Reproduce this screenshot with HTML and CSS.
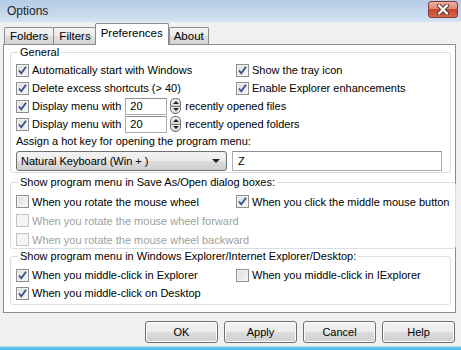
FILE: index.html
```html
<!DOCTYPE html>
<html lang="en">
  <head>
    <meta charset="utf-8" />
    <title>Options</title>
    <link rel="stylesheet" href="styles.css">
  </head>
  <body>
    <div class="window">
      <div class="titlebar">
        <span class="title">Options</span>
        <div class="close">
          <svg width="14" height="11" viewBox="0 0 14 11">
            <path d="M3 1.5 L11 9.5 M11 1.5 L3 9.5" stroke="#5a2a22" stroke-width="4.2" stroke-linecap="round"/>
            <path d="M3 1.5 L11 9.5 M11 1.5 L3 9.5" stroke="#fff" stroke-width="2.4" stroke-linecap="round"/>
          </svg>
        </div>
      </div>

      <div class="client">
        <div class="tabs">
          <div class="tab">Folders</div>
          <div class="tab">Filters</div>
          <div class="tab active">Preferences</div>
          <div class="tab about">About</div>
        </div>

        <div class="panel">
          <fieldset class="group general">
            <legend>General</legend>
            <div class="row">
              <label class="check col"><span class="cb on"></span>Automatically start with Windows</label>
              <label class="check"><span class="cb on"></span>Show the tray icon</label>
            </div>
            <div class="row">
              <label class="check col"><span class="cb on"></span>Delete excess shortcuts (&gt; 40)</label>
              <label class="check"><span class="cb on"></span>Enable Explorer enhancements</label>
            </div>
            <div class="row">
              <label class="check"><span class="cb on"></span>Display menu with</label>
              <div class="num">20</div>
              <div class="spin"><span class="up"></span><span class="down"></span></div>
              <span class="after">recently opened files</span>
            </div>
            <div class="row">
              <label class="check"><span class="cb on"></span>Display menu with</label>
              <div class="num">20</div>
              <div class="spin"><span class="up"></span><span class="down"></span></div>
              <span class="after">recently opened folders</span>
            </div>
            <div class="label">Assign a hot key for opening the program menu:</div>
            <div class="hotkey">
              <div class="combo">Natural Keyboard (Win + )<span class="arrow"></span></div>
              <div class="field">Z</div>
            </div>
          </fieldset>

          <fieldset class="group dialogs">
            <legend>Show program menu in Save As/Open dialog boxes:</legend>
            <div class="row">
              <label class="check col"><span class="cb"></span>When you rotate the mouse wheel</label>
              <label class="check"><span class="cb on"></span>When you click the middle mouse button</label>
            </div>
            <div class="row">
              <label class="check off"><span class="cb"></span>When you rotate the mouse wheel forward</label>
            </div>
            <div class="row">
              <label class="check off"><span class="cb"></span>When you rotate the mouse wheel backward</label>
            </div>
          </fieldset>

          <fieldset class="group explorer">
            <legend>Show program menu in Windows Explorer/Internet Explorer/Desktop:</legend>
            <div class="row">
              <label class="check col"><span class="cb on"></span>When you middle-click in Explorer</label>
              <label class="check"><span class="cb"></span>When you middle-click in IExplorer</label>
            </div>
            <div class="row">
              <label class="check"><span class="cb on"></span>When you middle-click on Desktop</label>
            </div>
          </fieldset>
        </div>

        <div class="buttons">
          <div class="btn">OK</div>
          <div class="btn">Apply</div>
          <div class="btn">Cancel</div>
          <div class="btn">Help</div>
        </div>
      </div>
      <div class="frame-bottom"></div>
    </div>
  </body>
</html>
```

FILE: styles.css
```css
* {
  box-sizing: border-box;
}

body {
  margin: 0;
  width: 461px;
  height: 350px;
  overflow: hidden;
  background-color: #f0f0f0;
  font-family: "Liberation Sans", Arial, sans-serif;
  font-size: 11px;
  color: #000;
}

.window {
  height: 350px;
  display: flex;
  flex-direction: column;
}

.titlebar {
  height: 22px;
  flex: none;
  display: flex;
  align-items: center;
  justify-content: space-between;
  padding: 0 3px 0 7px;
  background: linear-gradient(#b4cce8, #c9daee 70%, #d6e3f2);
}

.title {
  font-size: 12px;
  color: #1e1e1e;
}

.close {
  width: 30px;
  height: 17px;
  margin-top: -3px;
  border: 1px solid #843b2e;
  border-radius: 3px;
  display: flex;
  align-items: center;
  justify-content: center;
  background: linear-gradient(#eab2a4, #dc8672 45%, #c8462c 50%, #d2684f);
}

.client {
  flex: 1;
  padding: 0 5px 0 3px;
}

.tabs {
  height: 22px;
  display: flex;
  align-items: flex-end;
  padding-left: 1px;
}

.tab {
  height: 17px;
  padding: 0 5px;
  line-height: 16px;
  font-size: 11.5px;
  border: 1px solid #898c95;
  border-bottom: none;
  border-radius: 2px 2px 0 0;
  background: linear-gradient(#f3f3f3, #ebebeb 50%, #dddddd 51%, #d6d6d6);
  margin-right: -1px;
}

.tab.active {
  height: 22px;
  padding: 0 5px;
  line-height: 19px;
  background: #fff;
  margin: 0 0 -1px -1px;
  position: relative;
  z-index: 1;
}

.tab.about {
  padding: 0 4px;
}

.panel {
  height: 269px;
  border: 1px solid #898c95;
  background: #fff;
  padding: 1px 4px 0 6px;
}

.group {
  margin: 0;
  border: 1px solid #d5dfe5;
  border-radius: 3px;
  padding: 2px 5px 0 5px;
}

legend {
  padding: 0 2px;
  margin-left: 2px;
  line-height: 13px;
}

.general {
  height: 127px;
}

.dialogs {
  margin-top: 3px;
  height: 73px;
  padding-top: 3px;
}

.dialogs .row {
  height: 19px;
}

.explorer {
  margin-top: 1px;
  height: 55px;
  padding-top: 3px;
}

.row {
  height: 18px;
  display: flex;
  align-items: center;
}

.col {
  width: 220px;
}

.check {
  display: flex;
  align-items: center;
  white-space: nowrap;
}

.check.off {
  color: #a0a0a0;
}

.cb {
  width: 13px;
  height: 13px;
  margin-right: 3px;
  border: 1px solid #8e8f8f;
  background: linear-gradient(135deg, #dcdcdc, #f7f7f7);
  box-shadow: inset 0 0 0 1px #f4f4f4;
  flex: none;
}

.cb.on {
  background:
    url("data:image/svg+xml;utf8,<svg xmlns='http://www.w3.org/2000/svg' width='11' height='11'><path d='M2 5.5 L4.3 8.3 L9 1.8' fill='none' stroke='%23384f8a' stroke-width='1.8'/></svg>") center no-repeat,
    linear-gradient(135deg, #dcdcdc, #f7f7f7);
}

.check.off .cb {
  border-color: #c4c4c4;
  background: #f4f4f4;
  box-shadow: none;
}

.num {
  width: 42px;
  height: 17px;
  margin-left: 4px;
  border: 1px solid #abadb3;
  border-top-color: #8c8f95;
  padding: 1px 0 0 4px;
  line-height: 13px;
  background: #fff;
}

.spin {
  width: 11px;
  height: 16px;
  margin-left: 3px;
  display: flex;
  flex-direction: column;
}

.spin span {
  flex: 1;
  border: 1px solid #707070;
  background: linear-gradient(#f2f2f2, #d6d6d6);
  display: flex;
  align-items: center;
  justify-content: center;
}

.spin .up {
  border-radius: 5px 5px 0 0;
  border-bottom: none;
}

.spin .down {
  border-radius: 0 0 5px 5px;
}

.spin .up::after,
.spin .down::after {
  content: "";
  border-left: 3px solid transparent;
  border-right: 3px solid transparent;
}

.spin .up::after {
  border-bottom: 3px solid #222;
}

.spin .down::after {
  border-top: 3px solid #222;
}

.after {
  margin-left: 4px;
}

.label {
  height: 17px;
  line-height: 17px;
}

.hotkey {
  display: flex;
  gap: 5px;
  margin-top: 1px;
}

.combo {
  width: 211px;
  height: 20px;
  border: 1px solid #707070;
  border-radius: 3px;
  padding: 0 0 0 4px;
  line-height: 18px;
  display: flex;
  justify-content: space-between;
  align-items: center;
  background: linear-gradient(#f2f2f2, #ebebeb 50%, #dddddd 51%, #cfcfcf);
}

.combo .arrow {
  margin-right: 6px;
  border-left: 4px solid transparent;
  border-right: 4px solid transparent;
  border-top: 4px solid #1a1a1a;
}

.field {
  width: 210px;
  height: 20px;
  border: 1px solid #abadb3;
  border-top-color: #8c8f95;
  padding-left: 5px;
  line-height: 18px;
  background: #fff;
}

.buttons {
  display: flex;
  justify-content: flex-end;
  gap: 6px;
  padding: 8px 1px 0 0;
}

.btn {
  width: 73px;
  height: 22px;
  border: 1px solid #707070;
  border-radius: 3px;
  text-align: center;
  line-height: 20px;
  background: linear-gradient(#f2f2f2, #ebebeb 50%, #dddddd 51%, #cfcfcf);
  box-shadow: inset 0 0 0 1px #fcfcfc;
}

.frame-bottom {
  height: 4px;
  flex: none;
  background: linear-gradient(#cfe6f4, #64c5ec 40%, #41b4e6);
}
```
